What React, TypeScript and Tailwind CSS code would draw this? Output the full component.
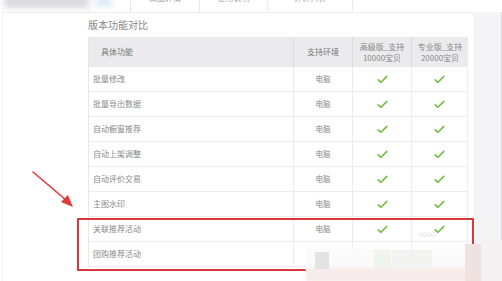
import { Fragment } from "react"

const rows = [
  "批量修改",
  "批量导出数据",
  "自动橱窗推荐",
  "自动上架调整",
  "自动评价交易",
  "主图水印",
  "关联推荐活动",
  "团购推荐活动",
]

function Check() {
  return (
    <svg width="11" height="9" viewBox="0 0 11 9" className="block">
      <path d="M1.2 4.8 L4 7.3 L9.8 1.4" fill="none" stroke="#72bd42" strokeWidth="1.6" strokeLinecap="round" strokeLinejoin="round" />
    </svg>
  )
}

function App() {
  return (
    <div
      className="relative w-[502px] h-[281px] overflow-hidden bg-white text-[#888]"
      style={{ fontFamily: '"Noto Sans CJK SC", "Noto Sans", sans-serif' }}
    >
      {/* top tab strip, mostly scrolled off */}
      <div className="flex h-[12px]">
        <div className="w-[130px] h-full relative">
          <div className="absolute left-[4px] top-[-4px] w-[85px] h-[12px] bg-[#d9d9dc] blur-[3px]" />
          <div className="absolute left-[96px] top-[-2px] w-[16px] h-[8px] bg-[#d6e6f7] blur-[3px]" />
        </div>
        <div className="w-[70px] h-full border-x border-[#e6e6e6] flex justify-center">
          <span className="text-[8px] leading-[8px] mt-[-6px] text-[#999]">商品详情</span>
        </div>
        <div className="w-[68px] h-full border-r border-[#ececec] flex justify-center">
          <span className="text-[8px] leading-[8px] mt-[-6px] text-[#aaa]">使用说明</span>
        </div>
        <div className="w-[85px] h-full border-r border-[#ececec] flex justify-center">
          <span className="text-[8px] leading-[8px] mt-[-6px] text-[#aaa]">评价列表</span>
        </div>
        <div className="flex-1" />
      </div>

      <div className="flex h-[269px]">
        <div className="w-[2px]" />
        <div className="w-[471px] border-l border-t border-[#eeeeee] pl-[85px]">
          <div className="pt-[5px] h-[19px] text-[10px] leading-[14px] text-[#888]">版本功能对比</div>
          <div className="mt-[5px] grid grid-cols-[204px_59px_59px_57px] w-[379px] border-l border-[#e8e8e8] text-[8px]">
            <div className="h-[30px] bg-[#ebebee] flex items-center pl-[12px] text-[#777]">具体功能</div>
            <div className="h-[30px] bg-[#ebebee] border-l border-[#dcdce0] flex items-center justify-center text-[#777]">支持环境</div>
            <div className="h-[30px] bg-[#ebebee] border-l border-[#dcdce0] flex flex-col items-center justify-center leading-[11px] text-[#888]">
              <span>高级版_支持</span>
              <span>10000宝贝</span>
            </div>
            <div className="h-[30px] bg-[#ebebee] border-l border-[#dcdce0] flex flex-col items-center justify-center leading-[11px] text-[#888]">
              <span>专业版_支持</span>
              <span>20000宝贝</span>
            </div>
            {rows.map((name) => (
              <Fragment key={name}>
                <div className="h-[25px] border-b border-[#ececec] flex items-center pl-[4px] text-[#8a8a8a]">{name}</div>
                <div className="h-[25px] border-b border-l border-[#ececec] flex items-center justify-center text-[#888] text-[7.5px]">电脑</div>
                <div className="h-[25px] border-b border-l border-[#ececec] flex items-center justify-center">
                  <Check />
                </div>
                <div className="h-[25px] border-b border-l border-r border-[#ececec] flex items-center justify-center">
                  <Check />
                </div>
              </Fragment>
            ))}
          </div>
        </div>
        <div className="flex-1 bg-[#f4f3f6] border-r border-[#dedde2]" />
      </div>

      {/* annotation: red box and arrow */}
      <div className="absolute left-[77px] top-[218px] w-[397px] h-[53px] border-2 border-[#d8373c] rounded-[1px]" />
      <svg className="absolute left-0 top-0" width="502" height="281" viewBox="0 0 502 281">
        <line x1="33" y1="172" x2="66" y2="200" stroke="#e0393c" strokeWidth="1.6" strokeLinecap="round" />
        <polygon points="73,207 61,202 68,195" fill="#e0393c" />
      </svg>
      <span className="absolute left-[418px] top-[228px] text-[9px] text-[#e4e4e4]">∞∞</span>

      {/* blurred watermark mosaic */}
      <div className="absolute left-[306px] top-[249px] w-[196px] h-[32px] bg-[#fbfafa]" />
      <div className="absolute left-[306px] top-[268px] w-[196px] h-[13px] bg-[#f7ecec] blur-[1px]" />
      <div className="absolute left-[315px] top-[252px] w-[14px] h-[17px] bg-[#e3e3e3]" />
      <div className="absolute left-[374px] top-[250px] w-[17px] h-[18px] bg-[#eff5ec]" />
      <div className="absolute left-[392px] top-[250px] w-[40px] h-[18px] bg-[#f3f4f2]" />
      <div className="absolute left-[465px] top-[244px] w-[16px] h-[37px] bg-[#f1e2e2]" />
      <div className="absolute left-[481px] top-[240px] w-[21px] h-[41px] bg-[#f6f1f3]" />
    </div>
  )
}

export default App
